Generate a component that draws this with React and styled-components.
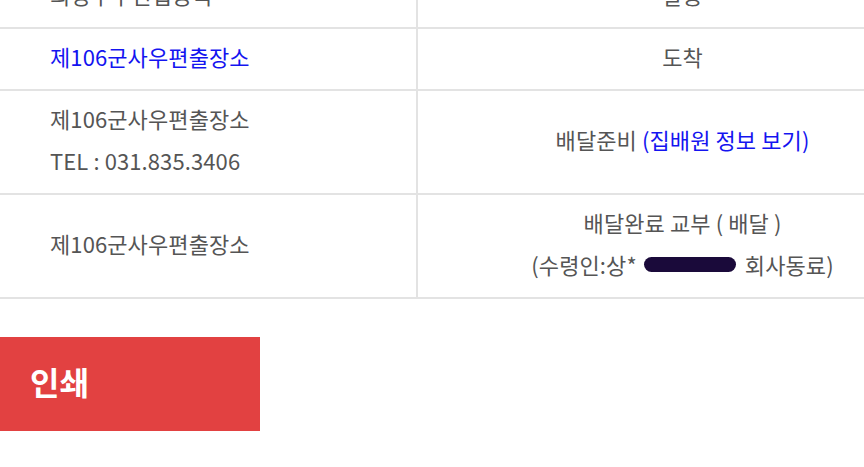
import React from 'react';
import styled, { createGlobalStyle } from 'styled-components';

const Global = createGlobalStyle`
  html, body {
    margin: 0;
    padding: 0;
    background: #fff;
    overflow: hidden;
  }
  body {
    font-family: "Noto Sans CJK KR", "Noto Sans", sans-serif;
  }
`;

const Page = styled.div`
  width: 947px;
  margin-top: -33px;
`;

const Table = styled.table`
  width: 100%;
  border-collapse: collapse;
  table-layout: fixed;
  font-size: 22px;
  letter-spacing: 0.1px;
  color: #555;
  td {
    border-bottom: 2px solid #e3e3e3;
    padding: 6px 0 12px;
    line-height: 42px;
    vertical-align: middle;
  }
`;

const Place = styled.td`
  width: 366px;
  padding-left: 50px !important;
  border-right: 2px solid #e3e3e3;
  text-align: left;
`;

const Status = styled.td`
  text-align: center;
`;

const Link = styled.span`
  color: #1414f0;
`;

const Blot = styled.span`
  display: inline-block;
  width: 92px;
  height: 15px;
  margin: 0 4px 0 2px;
  border-radius: 8px;
  background: #1a0a3a;
  vertical-align: 2px;
`;

const PrintButton = styled.button`
  display: flex;
  align-items: center;
  width: 260px;
  height: 94px;
  margin-top: 38px;
  padding: 0 0 6px 30px;
  border: none;
  background: #e24141;
  color: #fff;
  font-family: "Noto Sans CJK KR", sans-serif;
  font-size: 32px;
  font-weight: 700;
  cursor: pointer;
`;

const rows = [
  { place: ['의정부우편집중국'], status: '발송' },
  { place: ['제106군사우편출장소'], status: '도착', link: true },
];

const App = () => {
  return (
    <Page>
      <Global />
      <Table>
        <tbody>
          {rows.map((r, i) => (
            <tr key={i}>
              <Place>{r.link ? <Link>{r.place[0]}</Link> : r.place[0]}</Place>
              <Status>{r.status}</Status>
            </tr>
          ))}
          <tr>
            <Place>
              제106군사우편출장소
              <br />
              TEL : 031.835.3406
            </Place>
            <Status>
              배달준비 <Link>(집배원 정보 보기)</Link>
            </Status>
          </tr>
          <tr>
            <Place>제106군사우편출장소</Place>
            <Status>
              배달완료 교부 ( 배달 )
              <br />
              (수령인:상* <Blot /> 회사동료)
            </Status>
          </tr>
        </tbody>
      </Table>
      <PrintButton>인쇄</PrintButton>
    </Page>
  );
};

export default App;
